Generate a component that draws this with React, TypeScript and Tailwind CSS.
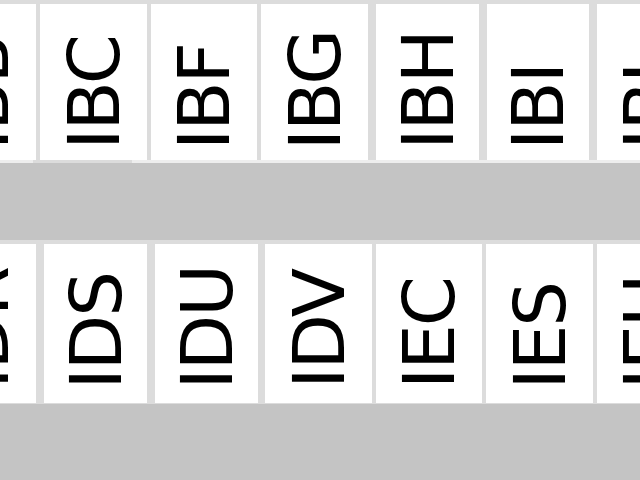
const font = "font-['DejaVu_Sans',sans-serif]";

type Cell = {
  label: string;
  cls: string;
  align?: "start" | "end";
};

// widths and gaps measured from the strip; the two rows are not quite aligned
const topRow: Cell[] = [
  { label: "IBB", cls: "w-[36px]", align: "end" },
  { label: "IBC", cls: "ml-[4px] w-[107px]" },
  { label: "IBF", cls: "ml-[4px] w-[106px]" },
  { label: "IBG", cls: "ml-[4px] w-[107px]" },
  { label: "IBH", cls: "ml-[8px] w-[103px]" },
  { label: "IBI", cls: "ml-[8px] w-[102px]" },
  { label: "IBL", cls: "ml-[8px] flex-1 min-w-0", align: "start" },
];

const bottomRow: Cell[] = [
  { label: "IDR", cls: "w-[36px]", align: "end" },
  { label: "IDS", cls: "ml-[8px] w-[103px]" },
  { label: "IDU", cls: "ml-[8px] w-[103px]" },
  { label: "IDV", cls: "ml-[7px] w-[107px]" },
  { label: "IEC", cls: "ml-[4px] w-[106px]" },
  { label: "IES", cls: "ml-[4px] w-[107px]" },
  { label: "IEU", cls: "ml-[4px] flex-1 min-w-0", align: "start" },
];

const Label = ({ text }: { text: string }) => (
  <span
    className={`${font} rotate-180 text-[72px] leading-none tracking-[-2px] text-black [writing-mode:vertical-rl]`}
  >
    {text}
  </span>
);

const CodeCell = ({ cell, pad }: { cell: Cell; pad: string }) => {
  // cut-off cells at the edges keep a full-width box so the text is clipped like the screenshot
  if (cell.align) {
    return (
      <div
        className={`flex h-full shrink-0 overflow-hidden bg-white ${cell.cls} ${
          cell.align === "end" ? "justify-end" : "justify-start"
        }`}
      >
        <div className={`flex h-full w-[106px] shrink-0 items-end justify-center ${pad}`}>
          <Label text={cell.label} />
        </div>
      </div>
    );
  }
  return (
    <div className={`flex h-full shrink-0 items-end justify-center bg-white ${pad} ${cell.cls}`}>
      <Label text={cell.label} />
    </div>
  );
};

export default function App() {
  return (
    <div className="h-[480px] w-[640px] overflow-hidden bg-[#c4c4c4]">
      <div className="flex h-[160px] bg-[#dcdcdc] pt-[4px]">
        {topRow.map((c) => (
          <CodeCell key={c.label} cell={c} pad="pb-[10px]" />
        ))}
      </div>
      <div className="h-[3px] bg-[#eeeeee]">
        <div className="ml-[33px] h-full w-[99px] bg-[#dcdcdc]" />
      </div>
      <div className="mt-[77px] flex h-[164px] bg-[#dcdcdc] pt-[4px] pb-[1px]">
        {bottomRow.map((c) => (
          <CodeCell key={c.label} cell={c} pad="pb-[14px]" />
        ))}
      </div>
    </div>
  );
}
